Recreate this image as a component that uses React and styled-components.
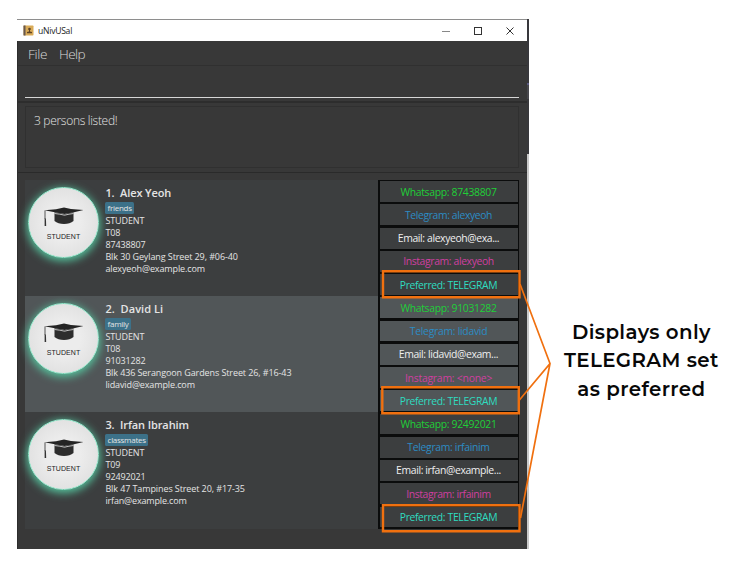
import React from "react";
import styled, { createGlobalStyle } from "styled-components";

const Global = createGlobalStyle`
  * { box-sizing: border-box; }
  body { margin: 0; background: #fff; }
`;

const Page = styled.main`
  position: relative;
  display: flex;
  width: 733px;
  height: 567px;
  padding: 19px 0 0 17px;
  overflow: hidden;
  background: #fff;
  font-family: "Open Sans", "Noto Sans", sans-serif;
`;

const AppWindow = styled.section`
  display: flex;
  flex-direction: column;
  width: 510px;
  height: 530px;
  background: #383838;
  border-left: 1px solid #2d2d2d;
`;

const WindowEdge = styled.div`
  width: 2px;
  height: 530px;
  background: linear-gradient(#38383c 0 64px, #5a5a80 64px 66px, #47474c 66px 80px, #38383b 80px 135px, #c9c9c9 135px);
`;

const TitleBar = styled.header`
  display: flex;
  align-items: center;
  height: 22px;
  margin-left: -1px;
  padding: 0 13px 0 6px;
  background: #fff;
  border-top: 1px solid #8e8e8e;
`;

const Title = styled.h1`
  flex: 1;
  margin: 0 0 0 4px;
  font-size: 8.6px;
  font-weight: 400;
  letter-spacing: -0.26px;
  color: #222;
`;

const WindowControls = styled.div`
  display: flex;
  gap: 24px;
  svg { display: block; }
`;

const MenuBar = styled.nav`
  display: flex;
  gap: 12px;
  height: 25px;
  padding: 3px 0 0 10px;
  border-bottom: 1px solid #303030;
  font-size: 13.6px;
  line-height: 19px;
  font-weight: 300;
  color: #d8d8d8;
`;

const MenuItem = styled.span`
  letter-spacing: ${(p) => p.$spacing}px;
`;

const CommandArea = styled.div`
  height: 37px;
  padding: 31px 8px 0 7px;
  border-bottom: 2px solid #2d2d2d;
`;

const CommandLine = styled.div`
  height: 1px;
  background: #d6d6d6;
`;

const ResultArea = styled.div`
  height: 70px;
  padding: 3px 8px 4px 7px;
  border-bottom: 1px solid #2a2a2a;
`;

const ResultBox = styled.div`
  height: 62px;
  padding: 5px 8px;
  border: 1px solid #303030;
  font-size: 12px;
  line-height: 18px;
  font-weight: 300;
  letter-spacing: -0.3px;
  color: #e4e4e4;
`;

const PersonList = styled.div`
  margin: 7px 8px 0 7px;
`;

const PersonRow = styled.article`
  display: flex;
  height: 116.2px;
  background: ${(p) => (p.$alt ? "#515658" : "#3c3e3f")};
`;

const AvatarCell = styled.div`
  flex: none;
  width: 80.4px;
  padding: 7px 0 0 3px;
`;

const Avatar = styled.div`
  display: flex;
  flex-direction: column;
  align-items: center;
  width: 71px;
  height: 71px;
  padding-top: 19px;
  border: 1.5px solid #94edcf;
  border-radius: 50%;
  background: radial-gradient(circle, #ececec 35%, #dadada 100%);
  box-shadow: 0 2px 8px 1px #56c8a0;
  svg { display: block; }
`;

const AvatarLabel = styled.span`
  margin-top: 5px;
  font-family: "Liberation Sans", sans-serif;
  font-size: 7px;
  line-height: 9px;
  color: #222;
  letter-spacing: 0.05px;
`;

const Details = styled.div`
  flex: 1;
  min-width: 0;
  padding-top: 4px;
  color: #e4e4e4;
`;

const Name = styled.h2`
  margin: 0;
  font-size: 11px;
  line-height: 17px;
  font-weight: 600;
  letter-spacing: ${(p) => p.$spacing}px;
  white-space: pre;
`;

const Tag = styled.span`
  display: block;
  width: fit-content;
  height: 12px;
  margin: 1px 0 0.5px;
  padding: 0 2.2px;
  border-radius: 1.5px;
  background: #3c7189;
  font-size: 8px;
  line-height: 12px;
  letter-spacing: -0.28px;
`;

const Line = styled.p`
  margin: 0;
  font-size: 9px;
  line-height: 12px;
  letter-spacing: ${(p) => p.$spacing ?? 0}px;
  white-space: nowrap;
`;

const ContactPanel = styled.div`
  display: grid;
  flex: none;
  grid-template-rows: repeat(5, 1fr);
  gap: 2.4px;
  width: 141px;
  padding: 1.2px 1.5px;
  background: #0b0c0c;
`;

const Contact = styled.div`
  display: flex;
  align-items: center;
  justify-content: center;
  background: ${(p) => (p.$alt ? "#515658" : "#3c3e3f")};
  color: ${(p) => p.$color};
  font-size: 10.4px;
  line-height: 14px;
  letter-spacing: ${(p) => p.$spacing - 0.1}px;
  white-space: nowrap;
`;

const Caption = styled.p`
  width: 170px;
  margin: 298.6px 0 0 27.4px;
  font-family: Montserrat, Inter, sans-serif;
  font-size: 19.8px;
  line-height: 28.6px;
  font-weight: 600;
  text-align: center;
  color: #080808;
`;

const CaptionLine = styled.span`
  display: block;
  letter-spacing: ${(p) => p.$spacing}px;
`;

const Callouts = styled.svg`
  position: absolute;
  inset: 0;
  pointer-events: none;
`;

const contactColors = ["#20cf38", "#2c8cc4", "#efefef", "#cf3fa0", "#2fdcc0"];

const people = [
  {
    name: "1.  Alex Yeoh", nameSpacing: -0.1, tag: "friends",
    lines: [["STUDENT", -0.12], ["T08", -0.1], ["87438807", -0.12], ["Blk 30 Geylang Street 29, #06-40", -0.1], ["alexyeoh@example.com", -0.12]],
    contacts: [["Whatsapp: 87438807", -0.22], ["Telegram: alexyeoh", -0.28], ["Email: alexyeoh@exa...", -0.28], ["Instagram: alexyeoh", -0.27], ["Preferred: TELEGRAM", -0.26]],
  },
  {
    name: "2.  David Li", nameSpacing: 0.05, tag: "family", alt: true,
    lines: [["STUDENT", -0.12], ["T08", -0.1], ["91031282", -0.12], ["Blk 436 Serangoon Gardens Street 26, #16-43", -0.1], ["lidavid@example.com", -0.12]],
    contacts: [["Whatsapp: 91031282", -0.22], ["Telegram: lidavid", -0.18], ["Email: lidavid@exam...", -0.27], ["Instagram: <none>", -0.13], ["Preferred: TELEGRAM", -0.26]],
  },
  {
    name: "3.  Irfan Ibrahim", nameSpacing: -0.1, tag: "classmates",
    lines: [["STUDENT", -0.12], ["T09", -0.1], ["92492021", -0.12], ["Blk 47 Tampines Street 20, #17-35", -0.1], ["irfan@example.com", -0.16]],
    contacts: [["Whatsapp: 92492021", -0.22], ["Telegram: irfainim", -0.22], ["Email: irfan@example...", -0.27], ["Instagram: irfainim", -0.28], ["Preferred: TELEGRAM", -0.26]],
  },
];

function AddressBookIcon() {
  return (
    <svg width="11" height="11" viewBox="0 0 11 11">
      <rect x="0.5" y="0.5" width="10" height="10" rx="0.8" fill="#d9ab58" />
      <rect x="0.5" y="0.5" width="2" height="10" fill="#67584f" />
      <circle cx="6.5" cy="4" r="1.3" fill="#5f4424" />
      <path d="M6 5h1v1.500l2 .6v1.200H4V7.100l2-.6z" fill="#5f4424" />
    </svg>
  );
}

function CapIcon() {
  return (
    <svg width="42" height="20" viewBox="0 0 42 20">
      <path d="M1.500 3.300 13 2.300 21 0.500 28 2 40.500 2.900 31 5.300 21.500 7 13 5.400Z" fill="#242424" />
      <path d="M11.500 5.200Q16 5.200 21.500 7.300 26 5.200 30.500 5.200V14Q27 17 21 17T11.500 14Z" fill="#2d2d2d" />
      <path d="M11.500 6.500Q17 7 21.500 8.200 26 7 30.500 6.500" fill="none" stroke="#e4e4e4" strokeWidth="0.8" />
      <path d="M2 3.500V12" fill="none" stroke="#444" strokeWidth="0.9" />
      <path d="M1.600 11.500H2.900L3.200 19H1.600Z" fill="#333" />
    </svg>
  );
}

function Person({ person }) {
  return (
    <PersonRow $alt={person.alt}>
      <AvatarCell>
        <Avatar>
          <CapIcon />
          <AvatarLabel>STUDENT</AvatarLabel>
        </Avatar>
      </AvatarCell>
      <Details>
        <Name $spacing={person.nameSpacing}>{person.name}</Name>
        <Tag>{person.tag}</Tag>
        {person.lines.map(([text, spacing]) => (
          <Line key={text} $spacing={spacing}>{text}</Line>
        ))}
      </Details>
      <ContactPanel>
        {person.contacts.map(([text, spacing], i) => (
          <Contact key={text} $alt={person.alt} $color={contactColors[i]} $spacing={spacing}>{text}</Contact>
        ))}
      </ContactPanel>
    </PersonRow>
  );
}

export default function App() {
  return (
    <>
      <Global />
      <Page>
        <AppWindow>
          <TitleBar>
            <AddressBookIcon />
            <Title>uNivUSal</Title>
            <WindowControls>
              <svg width="8" height="8" viewBox="0 0 8 8"><path d="M0 4.500h8" stroke="#888" /></svg>
              <svg width="8" height="8" viewBox="0 0 8 8"><rect x="0.5" y="0.5" width="7" height="7" fill="none" stroke="#333" /></svg>
              <svg width="8" height="8" viewBox="0 0 8 8"><path d="M0.500 0.500l7 7M7.500 0.500l-7 7" stroke="#333" /></svg>
            </WindowControls>
          </TitleBar>
          <MenuBar>
            <MenuItem $spacing={-0.35}>File</MenuItem>
            <MenuItem $spacing={-0.6}>Help</MenuItem>
          </MenuBar>
          <CommandArea><CommandLine /></CommandArea>
          <ResultArea><ResultBox>3 persons listed!</ResultBox></ResultArea>
          <PersonList>
            {people.map((person) => <Person key={person.name} person={person} />)}
          </PersonList>
        </AppWindow>
        <WindowEdge />
        <Caption>
          <CaptionLine $spacing={0.4}>Displays only</CaptionLine>
          <CaptionLine $spacing={0.4}>TELEGRAM set</CaptionLine>
          <CaptionLine $spacing={0.4}>as preferred</CaptionLine>
        </Caption>
        <Callouts width="733" height="567" viewBox="0 0 733 567" fill="none" stroke="#f0700f">
          <path d="M383 271.200h136.500v26H383zM382.300 387.200h136.500v26H382.300zM383 505.200h136.500v26H383z" strokeWidth="2.4" />
          <path d="M520 284L550 363.500L519 400.500M550 363.500L520.500 518" strokeWidth="1.7" />
        </Callouts>
      </Page>
    </>
  );
}
